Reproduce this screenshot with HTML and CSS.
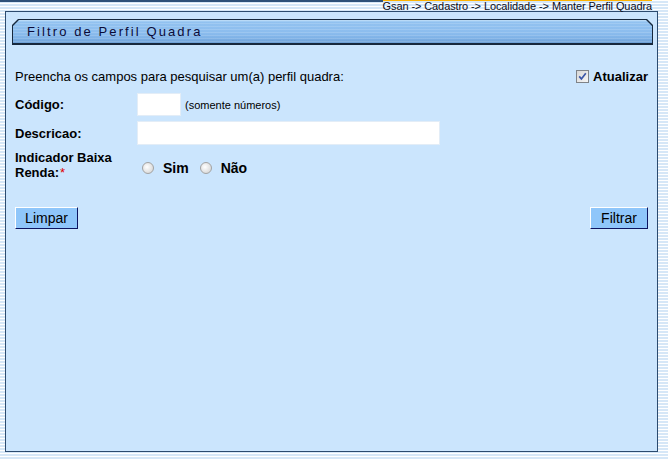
FILE: index.html
```html
<!DOCTYPE html>
<html lang="pt">
<head>
<meta charset="utf-8">
<title>Filtro de Perfil Quadra</title>
<link rel="stylesheet" href="styles.css">
</head>
<body>
<header class="topbar">
  <div class="topline"></div>
  <div class="crumb">Gsan -&gt; Cadastro -&gt; Localidade -&gt; Manter Perfil Quadra</div>
</header>
<main class="panel">
  <div class="titlebar"><div class="titlebar-inner">Filtro de Perfil Quadra</div></div>
  <form class="form">
    <div class="intro">
      <span>Preencha os campos para pesquisar um(a) perfil quadra:</span>
      <label class="atualizar">
        <svg class="chk" width="13" height="13" viewBox="0 0 13 13" aria-hidden="true">
          <defs>
            <linearGradient id="cg" x1="0" y1="0" x2="1" y2="1">
              <stop offset="0" stop-color="#d6d6d6"/>
              <stop offset="1" stop-color="#f7f7f7"/>
            </linearGradient>
          </defs>
          <rect x="0.5" y="0.5" width="12" height="12" fill="url(#cg)" stroke="#7f8388"/>
          <path d="M3.2 6.4 L5.4 8.9 L9.8 3.2" fill="none" stroke="#3a56a8" stroke-width="1.7"/>
        </svg>
        Atualizar
      </label>
    </div>
    <div class="row row-codigo">
      <span class="lbl">Código:</span>
      <div class="field">
        <input class="inp inp-codigo" type="text">
        <span class="hint">(somente números)</span>
      </div>
    </div>
    <div class="row row-desc">
      <span class="lbl">Descricao:</span>
      <div class="field">
        <input class="inp inp-desc" type="text">
      </div>
    </div>
    <div class="row row-ind">
      <div class="lbl lbl-wrap">
        <div>Indicador Baixa</div>
        <div class="lbl-line"><span>Renda:</span><span class="req">*</span></div>
      </div>
      <div class="field radios">
        <input class="radio" type="radio" name="ind"><span class="rlabel">Sim</span>
        <input class="radio radio2" type="radio" name="ind"><span class="rlabel">Não</span>
      </div>
    </div>
    <div class="actions">
      <button type="button" class="btn btn-limpar">Limpar</button>
      <button type="button" class="btn btn-filtrar">Filtrar</button>
    </div>
  </form>
</main>
</body>
</html>
```
FILE: styles.css
```css
html, body {
  margin: 0;
  padding: 0;
}
body {
  width: 668px;
  height: 459px;
  overflow: hidden;
  font-family: "Liberation Sans", Arial, sans-serif;
  color: #000;
  background: repeating-linear-gradient(to bottom, #ffffff 0, #ffffff 1px, #d6e7f7 1px, #d6e7f7 3px);
}
.topbar {
  display: flex;
  height: 11px;
}
.topline {
  flex: 1;
  border-top: 2px solid #2f5179;
}
.crumb {
  margin-right: 16px;
  border-top: 1px solid #ffb300;
  font-size: 11px;
  letter-spacing: -0.1px;
  line-height: 10px;
  height: 10px;
  white-space: nowrap;
  color: #0c0c20;
}
.panel {
  display: block;
  margin-left: 5px;
  width: 653px;
  height: 441px;
  box-sizing: border-box;
  border: 1px solid #2c4b6f;
  background: #cbe5fd;
}
.titlebar {
  margin: 7px 4px 0 6px;
  height: 26px;
  box-sizing: border-box;
  padding: 1px 1px 2px 1px;
  background: #17283d;
  clip-path: polygon(6px 0, calc(100% - 6px) 0, 100% 6px, 100% 100%, 0 100%, 0 6px);
}
.titlebar-inner {
  height: 100%;
  box-sizing: border-box;
  padding-left: 14px;
  clip-path: polygon(6px 0, calc(100% - 6px) 0, 100% 6px, 100% 100%, 0 100%, 0 6px);
  background:
    repeating-linear-gradient(to bottom, rgba(255,255,255,0.14) 0, rgba(255,255,255,0.14) 1px, rgba(255,255,255,0) 1px, rgba(255,255,255,0) 3px),
    linear-gradient(to bottom, #aed4f6 0, #aed4f6 1px, #92c2f0 2px, #8cbdee 55%, #7eb1e6 80%, #6c9fd6 100%);
  font-size: 13px;
  letter-spacing: 2.1px;
  line-height: 23px;
  color: #0b0b38;
  white-space: nowrap;
}
.form {
  padding: 0 9px;
}
.intro {
  margin-top: 21px;
  height: 20px;
  display: flex;
  align-items: center;
  justify-content: space-between;
  font-size: 13px;
}
.atualizar {
  display: flex;
  align-items: center;
  gap: 4px;
  font-weight: bold;
  font-size: 13px;
}
.chk {
  display: block;
}
.row {
  display: flex;
  align-items: center;
}
.row-codigo {
  margin-top: 6px;
  height: 25px;
}
.row-desc {
  margin-top: 3px;
  height: 26px;
}
.row-ind {
  margin-top: 3px;
  height: 31px;
}
.lbl {
  width: 122px;
  flex: none;
  font-weight: bold;
  font-size: 13px;
  line-height: 15px;
}
.lbl-line {
  display: flex;
  white-space: nowrap;
}
.req {
  color: #e00000;
  font-weight: normal;
  margin-left: 1px;
}
.field {
  display: flex;
  align-items: center;
}
.inp {
  box-sizing: border-box;
  margin: 0;
  border: 1px solid #e3edf7;
  background: #fff;
  padding: 0 2px;
  font-family: "Liberation Sans", Arial, sans-serif;
  font-size: 13px;
}
.inp-codigo {
  width: 44px;
  height: 23px;
  margin-right: 4px;
}
.inp-desc {
  width: 303px;
  height: 24px;
}
.hint {
  font-size: 11px;
}
.radios {
  padding-top: 7px;
}
.radio {
  -webkit-appearance: none;
  appearance: none;
  box-sizing: border-box;
  width: 12px;
  height: 12px;
  margin: 0 9px 0 5px;
  border: 1px solid #a3a3a3;
  border-radius: 50%;
  background: radial-gradient(circle at 40% 40%, #ffffff 0, #f0f0f0 30%, #cfcfcf 100%);
}
.radio2 {
  margin-left: 11px;
}
.rlabel {
  font-weight: bold;
  font-size: 14px;
}
.actions {
  margin-top: 27px;
  display: flex;
  justify-content: space-between;
}
.btn {
  height: 22px;
  box-sizing: border-box;
  padding: 0;
  margin: 0;
  border: 1px solid;
  border-color: #ffffff #0c1460 #0c1460 #ffffff;
  background: #8fc6fa;
  font-family: "Liberation Sans", Arial, sans-serif;
  font-size: 14px;
  color: #000;
  line-height: 18px;
}
.btn-limpar {
  width: 63px;
}
.btn-filtrar {
  width: 58px;
}
```
